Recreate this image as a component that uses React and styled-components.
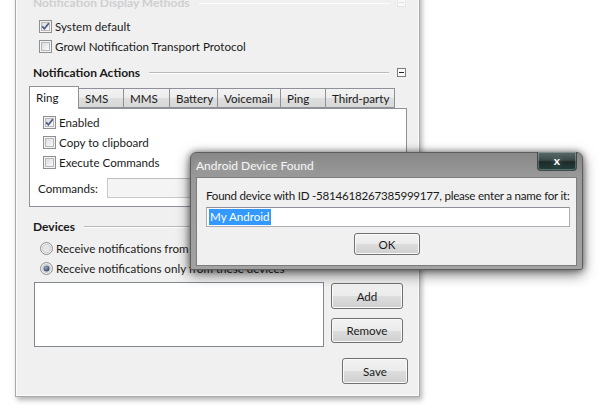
import React from 'react';
import styled, { createGlobalStyle } from 'styled-components';

const GlobalStyle = createGlobalStyle`
  html, body { margin: 0; padding: 0; background: #ffffff; }
  body {
    font-family: "Segoe UI", Lato, "Noto Sans", sans-serif;
    font-size: 11.6px;
    color: #1a1a1a;
  }
  * { box-sizing: border-box; }
`;

const Page = styled.div`
  position: relative;
  width: 600px;
  height: 414px;
  overflow: hidden;
  background: #ffffff;
`;

const Window = styled.div`
  margin: -14px 0 0 15px;
  width: 405px;
  display: flex;
  flex-direction: column;
  padding: 5px 11px 12px 17px;
  background: #f0f0f0;
  border: 1px solid #a9a9a9;
  box-shadow: inset 0 0 0 1px #fbfbfb, 2px 3px 5px rgba(0, 0, 0, 0.3);
`;

const SectionHeader = styled.div`
  display: flex;
  align-items: center;
  height: 20px;
  margin-top: ${p => p.$mt || 0}px;
  font-weight: bold;
  font-size: 12px;
  color: ${p => (p.$faded ? '#cfcfcf' : '#1a1a1a')};
`;

const HeaderLine = styled.div`
  flex: 1;
  height: 1px;
  margin: 0 8px 0 9px;
  background: ${p => (p.$faded ? 'transparent' : '#b9b9b9')};
  box-shadow: 0 1px 0 #ffffff;
`;

const CollapseBox = styled.div`
  width: 9px;
  height: 9px;
  margin-right: 2px;
  border: 1px solid ${p => (p.$faded ? '#e6e6e6' : '#7c7c7c')};
  background: ${p => (p.$faded ? '#f8f8f8' : '#fbfbfb')};
  display: flex;
  align-items: center;
  justify-content: center;
  &::after {
    content: '';
    width: 5px;
    height: 1px;
    background: ${p => (p.$faded ? '#e0e0e0' : '#222')};
  }
`;

const OptionRow = styled.label`
  display: flex;
  align-items: center;
  gap: ${p => p.$gap ?? 3}px;
  height: 20px;
  margin-left: ${p => p.$ml || 0}px;
  white-space: nowrap;
`;

const TabStrip = styled.div`
  display: flex;
  align-items: flex-end;
  height: 22px;
  margin: 4px 0 0 -4px;
  position: relative;
  z-index: 1;
`;

const Tab = styled.div`
  width: ${p => p.$w}px;
  height: ${p => (p.$active ? 23 : 20)}px;
  margin-bottom: ${p => (p.$active ? -1 : 0)}px;
  margin-left: -1px;
  &:first-child { margin-left: 0; }
  padding: 1px 0 0 6px;
  display: flex;
  align-items: ${p => (p.$active ? 'flex-start' : 'center')};
  line-height: ${p => (p.$active ? '20px' : '18px')};
  border: 1px solid #8e9198;
  border-bottom: ${p => (p.$active ? 'none' : '1px solid #8e9198')};
  background: ${p =>
    p.$active ? '#ffffff' : 'linear-gradient(#f3f3f3 0%, #ececec 50%, #dedede 51%, #d8d8d8 100%)'};
  position: relative;
  z-index: ${p => (p.$active ? 2 : 1)};
  white-space: nowrap;
`;

const TabPanel = styled.div`
  margin-left: -4px;
  width: 378px;
  height: 99px;
  background: #ffffff;
  border: 1px solid #8e9198;
  padding: 3px 0 0 0;
  display: flex;
  flex-direction: column;
`;

const CommandRow = styled.div`
  display: flex;
  align-items: center;
  gap: 9px;
  margin: 6px 0 0 8px;
  height: 20px;
`;

const TextInput = styled.div`
  width: ${p => p.$w}px;
  height: 20px;
  border: 1px solid ${p => (p.$disabled ? '#c9c9c9' : '#abadb3')};
  border-top-color: ${p => (p.$disabled ? '#bdbdbd' : '#8e9197')};
  background: ${p => (p.$disabled ? '#f4f4f4' : '#ffffff')};
  padding: 0 2px;
  display: flex;
  align-items: center;
`;

const Selection = styled.span`
  background: #3399ff;
  color: #ffffff;
  padding: 0 1px;
  line-height: 16px;
`;

const DeviceArea = styled.div`
  display: flex;
  gap: 7px;
  margin: 4px 0 0 1px;
`;

const ListBox = styled.div`
  width: 290px;
  height: 65px;
  background: #ffffff;
  border: 1px solid #828790;
`;

const ButtonColumn = styled.div`
  display: flex;
  flex-direction: column;
  gap: 9px;
  padding-top: 1px;
`;

const Button = styled.button`
  width: ${p => p.$w}px;
  height: ${p => p.$h || 25}px;
  font: inherit;
  color: #1a1a1a;
  border: 1px solid #707070;
  border-radius: 3px;
  background: linear-gradient(#f2f2f2 0%, #ebebeb 50%, #dddddd 51%, #cfcfcf 100%);
  box-shadow: inset 0 0 0 1px #fafafa;
  padding: 0;
`;

const SaveRow = styled.div`
  display: flex;
  justify-content: flex-end;
  margin-top: 11px;
`;

/* ---------- dialog (floats over the window) ---------- */

const Dialog = styled.div`
  position: absolute;
  left: 190px;
  top: 152px;
  width: 393px;
  height: 118px;
  display: flex;
  flex-direction: column;
  padding: 0 5px 3px 5px;
  background: linear-gradient(#888888 0px, #999999 24px, #a2a2a2 100%);
  border: 1px solid #5e5e5e;
  border-radius: 6px 6px 2px 2px;
  box-shadow: 0 4px 14px rgba(0, 0, 0, 0.55), 0 0 6px rgba(0, 0, 0, 0.45);
`;

const TitleBar = styled.div`
  display: flex;
  align-items: center;
  height: 24px;
  color: #f6f6f6;
  font-size: 12px;
  text-shadow: 0 0 6px rgba(255, 255, 255, 0.35);
`;

const TitleText = styled.div`
  flex: 1;
`;

const CloseButton = styled.div`
  align-self: flex-start;
  margin-top: -1px;
  width: 40px;
  height: 19px;
  border: 1px solid #3e4a48;
  border-top: none;
  border-radius: 0 0 4px 4px;
  background: linear-gradient(#5b6b69 0%, #3a4a48 45%, #1c2a28 55%, #23403c 100%);
  box-shadow: inset 0 0 0 1px rgba(255, 255, 255, 0.25);
  display: flex;
  align-items: center;
  justify-content: center;
  color: #ffffff;
  font-weight: bold;
  font-size: 12px;
  line-height: 1;
`;

const Client = styled.div`
  flex: 1;
  background: #f0f0f0;
  border: 1px solid #7d7d7d;
  padding: 8px 8px 0 9px;
  display: flex;
  flex-direction: column;
`;

const Message = styled.div`
  height: 20px;
  line-height: 20px;
  white-space: nowrap;
  letter-spacing: -0.24px;
`;

const DialogInput = styled(TextInput)`
  margin-top: 1px;
`;

const CenterRow = styled.div`
  display: flex;
  justify-content: center;
  margin-top: 6px;
`;

/* ---------- drawings ---------- */

function CheckBox({ checked }) {
  return (
    <svg width="13" height="13" viewBox="0 0 13 13">
      <defs>
        <linearGradient id="cbg" x1="0" y1="0" x2="1" y2="1">
          <stop offset="0" stopColor="#d9dbde" />
          <stop offset="1" stopColor="#fbfbfb" />
        </linearGradient>
      </defs>
      <rect x="0.5" y="0.5" width="12" height="12" fill="#f4f4f4" stroke="#8e8f8f" />
      <rect x="2.5" y="2.5" width="8" height="8" fill="url(#cbg)" stroke="#b6b8bb" />
      {checked && (
        <path d="M3.2 6.4 L5.4 8.8 L9.8 3.2" fill="none" stroke="#4a5a82" strokeWidth="1.7" />
      )}
    </svg>
  );
}

function Radio({ checked }) {
  return (
    <svg width="13" height="13" viewBox="0 0 13 13">
      <defs>
        <radialGradient id="rdot" cx="0.4" cy="0.35" r="0.7">
          <stop offset="0" stopColor="#9aa7c0" />
          <stop offset="1" stopColor="#2f3d5c" />
        </radialGradient>
      </defs>
      <circle cx="6.5" cy="6.5" r="6" fill="#f2f2f2" stroke="#8e8f8f" />
      <circle cx="6.5" cy="6.5" r="4.3" fill="#e4e5e7" stroke="#c3c5c8" strokeWidth="0.8" />
      {checked && <circle cx="6.5" cy="6.5" r="3" fill="url(#rdot)" />}
    </svg>
  );
}

const tabs = [
  { label: 'Ring', w: 50, active: true },
  { label: 'SMS', w: 46 },
  { label: 'MMS', w: 47 },
  { label: 'Battery', w: 49 },
  { label: 'Voicemail', w: 64 },
  { label: 'Ping', w: 46 },
  { label: 'Third-party', w: 70 },
];

export default function App() {
  return (
    <Page>
      <GlobalStyle />
      <Window>
        <SectionHeader $faded>
          Notification Display Methods
          <HeaderLine $faded />
          <CollapseBox $faded />
        </SectionHeader>
        <OptionRow $ml={6} style={{ marginTop: 4 }}>
          <CheckBox checked />
          System default
        </OptionRow>
        <OptionRow $ml={6}>
          <CheckBox />
          Growl Notification Transport Protocol
        </OptionRow>

        <SectionHeader $mt={6}>
          Notification Actions
          <HeaderLine />
          <CollapseBox />
        </SectionHeader>
        <TabStrip>
          {tabs.map(t => (
            <Tab key={t.label} $w={t.w} $active={t.active}>
              {t.label}
            </Tab>
          ))}
        </TabStrip>
        <TabPanel>
          <OptionRow $ml={13}>
            <CheckBox checked />
            Enabled
          </OptionRow>
          <OptionRow $ml={13}>
            <CheckBox />
            Copy to clipboard
          </OptionRow>
          <OptionRow $ml={13}>
            <CheckBox />
            Execute Commands
          </OptionRow>
          <CommandRow>
            Commands:
            <TextInput $w={288} $disabled />
          </CommandRow>
        </TabPanel>

        <SectionHeader $mt={9}>
          Devices
          <HeaderLine />
          <CollapseBox />
        </SectionHeader>
        <OptionRow $ml={7} style={{ marginTop: 2 }}>
          <Radio />
          Receive notifications from all devices
        </OptionRow>
        <OptionRow $ml={7}>
          <Radio checked />
          Receive notifications only from these devices
        </OptionRow>
        <DeviceArea>
          <ListBox />
          <ButtonColumn>
            <Button $w={72} $h={26}>Add</Button>
            <Button $w={72} $h={25}>Remove</Button>
          </ButtonColumn>
        </DeviceArea>
        <SaveRow>
          <Button $w={66} $h={26}>Save</Button>
        </SaveRow>
      </Window>

      <Dialog>
        <TitleBar>
          <TitleText>Android Device Found</TitleText>
          <CloseButton>x</CloseButton>
        </TitleBar>
        <Client>
          <Message>Found device with ID -5814618267385999177, please enter a name for it:</Message>
          <DialogInput $w={364}>
            <Selection>My Android</Selection>
          </DialogInput>
          <CenterRow>
            <Button $w={66} $h={22}>OK</Button>
          </CenterRow>
        </Client>
      </Dialog>
    </Page>
  );
}
